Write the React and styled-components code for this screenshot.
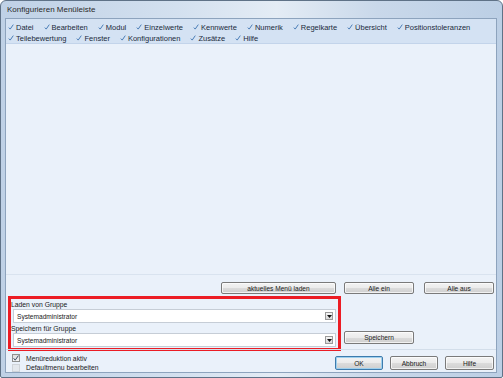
import React from 'react'
import styled, { createGlobalStyle } from 'styled-components'

const GlobalStyle = createGlobalStyle`
  html, body { margin: 0; padding: 0; background: #ffffff; }
  body { font-family: "Liberation Sans", Arial, sans-serif; }
`

const menuItems = [
  'Datei', 'Bearbeiten', 'Modul', 'Einzelwerte', 'Kennwerte', 'Numerik',
  'Regelkarte', 'Übersicht', 'Positionstoleranzen', 'Teilebewertung',
  'Fenster', 'Konfigurationen', 'Zusätze', 'Hilfe',
]

const Tick = () => (
  <svg width="6" height="6" viewBox="0 0 6 6">
    <path d="M0.8 3.6 L2.2 5.1 L5.3 0.6" fill="none" stroke="#4a7db6" strokeWidth="1" />
  </svg>
)

const Arrow = () => (
  <svg width="5" height="3" viewBox="0 0 5 3">
    <path d="M0 0 H5 L2.5 3 Z" fill="#111" />
  </svg>
)

export default function App() {
  return (
    <>
      <GlobalStyle />
      <Window>
        <TitleBar>Konfigurieren Menüleiste</TitleBar>
        <Panel>
          <MenuBar>
            {menuItems.map((m) => (
              <MenuItem key={m}>
                <Tick />
                <span>{m}</span>
              </MenuItem>
            ))}
          </MenuBar>
          <ListArea />
          <ButtonRow>
            <Button width={115}>aktuelles Menü laden</Button>
            <Button width={70}>Alle ein</Button>
            <Button width={70} style={{ marginLeft: 2 }}>Alle aus</Button>
          </ButtonRow>
          <GroupSection>
            <GroupBox>
              <GroupLabel>Laden von Gruppe</GroupLabel>
              <Combo>
                <ComboText>Systemadministrator</ComboText>
                <DropButton><Arrow /></DropButton>
              </Combo>
              <GroupLabel>Speichern für Gruppe</GroupLabel>
              <Combo>
                <ComboText>Systemadministrator</ComboText>
                <DropButton><Arrow /></DropButton>
              </Combo>
            </GroupBox>
            <SaveColumn>
              <Button width={70} height={13}>Speichern</Button>
            </SaveColumn>
          </GroupSection>
          <BottomRow>
            <Checks>
              <CheckRow>
                <CheckBox checked>
                  <svg width="6" height="6" viewBox="0 0 6 6">
                    <path d="M0.6 3.2 L2.2 5.2 L5.4 0.6" fill="none" stroke="#3b4d66" strokeWidth="1" />
                  </svg>
                </CheckBox>
                <span>Menüreduktion aktiv</span>
              </CheckRow>
              <CheckRow>
                <CheckBox />
                <span>Defaultmenu bearbeiten</span>
              </CheckRow>
            </Checks>
            <DialogButtons>
              <Button width={48} height={14} primary>OK</Button>
              <Button width={48} height={14}>Abbruch</Button>
              <Button width={49} height={14}>Hilfe</Button>
            </DialogButtons>
          </BottomRow>
        </Panel>
      </Window>
    </>
  )
}

const Window = styled.div`
  width: 503px;
  height: 378px;
  box-sizing: border-box;
  display: flex;
  flex-direction: column;
  padding: 0 5px 4px 4px;
  border: 1px solid #5f7287;
  border-radius: 6px 6px 2px 2px;
  background: linear-gradient(90deg, #bfd1e6 0%, #d3e0ef 35%, #e4ecf5 55%, #c9d8ea 75%, #bccfe5 100%);
`

const TitleBar = styled.div`
  height: 17px;
  display: flex;
  align-items: center;
  padding-left: 2px;
  font-size: 8px;
  color: #2a2a2a;
`

const Panel = styled.div`
  flex: 1;
  display: flex;
  flex-direction: column;
  border: 1px solid #8da3bd;
  background: #eaf1fa;
`

const MenuBar = styled.div`
  display: flex;
  flex-wrap: wrap;
  align-content: flex-start;
  column-gap: 10px;
  row-gap: 1px;
  height: 25px;
  box-sizing: border-box;
  padding: 3px 2px 0;
  background: #d4e2f3;
  border-bottom: 1px solid #c3d4ea;
`

const MenuItem = styled.div`
  display: flex;
  align-items: center;
  gap: 2px;
  height: 10px;
  font-size: 7.5px;
  color: #1b2a3c;
`

const ListArea = styled.div`
  flex: 1;
  border-bottom: 1px solid #d9e3ef;
`

const ButtonRow = styled.div`
  display: flex;
  justify-content: flex-end;
  gap: 8px;
  padding: 7px 2px 2px;
`

const Button = styled.div`
  width: ${(p) => p.width}px;
  height: ${(p) => p.height || 12}px;
  box-sizing: border-box;
  display: flex;
  align-items: center;
  justify-content: center;
  font-size: 6.6px;
  color: #1a1a1a;
  border: 1px solid ${(p) => (p.primary ? '#3d7bad' : '#7a7a7a')};
  border-radius: 2px;
  background: linear-gradient(#f3f3f3 0%, #ebebeb 50%, #dcdcdc 51%, #cfcfcf 100%);
  box-shadow: inset 0 0 0 1px ${(p) => (p.primary ? '#9fd0ee' : 'rgba(255,255,255,0.7)')};
`

const GroupSection = styled.div`
  display: flex;
  gap: 3px;
  padding-left: 2px;
`

const GroupBox = styled.div`
  width: 333px;
  box-sizing: border-box;
  border: 3px solid #ec1c24;
  padding: 0 2px 1px 0;
  display: flex;
  flex-direction: column;
`

const GroupLabel = styled.div`
  height: 10px;
  display: flex;
  align-items: center;
  font-size: 6.8px;
  color: #1a1a1a;
`

const Combo = styled.div`
  height: 14px;
  box-sizing: border-box;
  margin-left: 2px;
  display: flex;
  align-items: center;
  background: #ffffff;
  border: 1px solid #c6cdd6;
`

const ComboText = styled.span`
  flex: 1;
  padding-left: 3px;
  font-size: 6.6px;
  color: #1a1a1a;
`

const DropButton = styled.div`
  width: 8px;
  height: 8px;
  margin-right: 2px;
  box-sizing: border-box;
  display: flex;
  align-items: center;
  justify-content: center;
  border: 1px solid #9a9a9a;
  background: linear-gradient(#f6f6f6, #d8d8d8);
`

const SaveColumn = styled.div`
  display: flex;
  align-items: flex-end;
  padding-bottom: 7px;
`

const BottomRow = styled.div`
  height: 23px;
  box-sizing: border-box;
  display: flex;
  justify-content: space-between;
  border-top: 1px solid #d3deea;
  margin-top: -2px;
  padding: 4px 2px 0 6px;
`

const Checks = styled.div`
  display: flex;
  flex-direction: column;
  gap: 1px;
`

const CheckRow = styled.div`
  display: flex;
  align-items: center;
  gap: 6px;
  height: 9px;
  font-size: 6.8px;
  color: #1a1a1a;
`

const CheckBox = styled.div`
  width: 8px;
  height: 8px;
  box-sizing: border-box;
  display: flex;
  align-items: center;
  justify-content: center;
  border: 1px solid ${(p) => (p.checked ? '#8e8f8f' : '#d0d4d9')};
  background: ${(p) => (p.checked ? 'linear-gradient(#dcdcdc, #f4f4f4)' : '#e4e8ed')};
`

const DialogButtons = styled.div`
  display: flex;
  gap: 7px;
  padding-top: 2px;
`
